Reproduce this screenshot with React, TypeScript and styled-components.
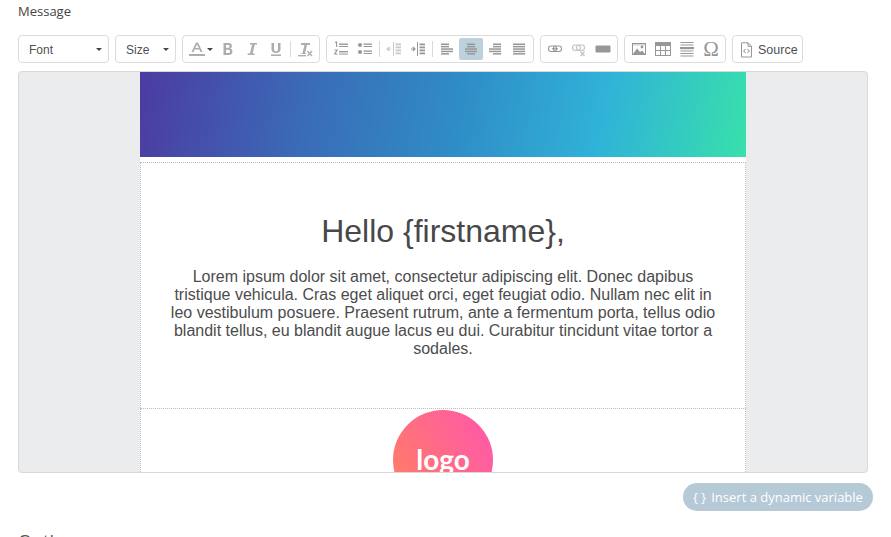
import React from "react";
import styled, { createGlobalStyle } from "styled-components";

const Global = createGlobalStyle`
  html, body { margin: 0; padding: 0; background: #fff; height: 537px; overflow: hidden; }
  body { font-family: "Open Sans", sans-serif; color: #4a4a4a; }
`;

const Page = styled.div`
  width: 855px;
  padding-left: 18px;
  display: flex;
  flex-direction: column;
`;
const Label = styled.div`
  font-size: 13px;
  line-height: 17px;
  margin-top: 3px;
  color: #444;
`;
const Toolbar = styled.div`
  display: flex;
  gap: 6px;
  margin-top: 15px;
  height: 28px;
`;
const Group = styled.div`
  display: flex;
  align-items: center;
  padding: 0 2px;
  border: 1px solid #dcdcdc;
  border-radius: 4px;
  background: #fff;
`;
const Combo = styled.div<{ $w: number; $pad: number }>`
  width: ${(p) => p.$w}px;
  box-sizing: border-box;
  display: flex;
  align-items: center;
  justify-content: space-between;
  padding: 1px 6px 0 ${(p) => p.$pad}px;
  border: 1px solid #dcdcdc;
  border-radius: 4px;
  font-family: "Liberation Sans", sans-serif;
  font-size: 12px;
  color: #505050;
`;
const Caret = styled.span`
  width: 0;
  height: 0;
  border-left: 3px solid transparent;
  border-right: 3px solid transparent;
  border-top: 3px solid #444;
`;
const Btn = styled.div<{ $active?: boolean; $w?: number }>`
  width: ${(p) => p.$w ?? 24}px;
  height: 22px;
  display: flex;
  align-items: center;
  justify-content: center;
  gap: 2px;
  border-radius: 2px;
  background: ${(p) => (p.$active ? "#bdd1dc" : "transparent")};
`;
const Sep = styled.div`
  width: 1px;
  height: 16px;
  margin: 0 2px;
  background: #d9d9d9;
`;
const SourceBtn = styled(Group)`
  width: 71px;
  box-sizing: border-box;
  padding: 1px 0 0 7px;
  gap: 5px;
  font-family: "Liberation Sans", sans-serif;
  font-size: 12.5px;
  color: #505050;
`;
const Editor = styled.div`
  width: 850px;
  height: 402px;
  box-sizing: border-box;
  margin-top: 8px;
  background: #ebecee;
  border: 1px solid #d8d8d8;
  border-radius: 4px;
  overflow: hidden;
`;
const Mail = styled.div`
  width: 606px;
  margin-left: 121px;
  background: #fff;
`;
const Hero = styled.div`
  height: 85px;
  background: linear-gradient(100deg, #4c3ba2 0%, #3a6cb7 28%, #2f8cc6 52%, #30b3d8 76%, #38e0ab 100%);
`;
const Spacer = styled.div`
  height: 5px;
  background: #fff;
`;
const Section = styled.div`
  box-sizing: border-box;
  border-style: dotted;
  border-color: #bdbdbd;
  border-width: 1px 1px 0 1px;
  text-align: center;
  font-family: "Liberation Sans", sans-serif;
  color: #4c4c4c;
`;
const TextSection = styled(Section)`
  height: 246px;
  padding: 49px 29px 0;
`;
const LogoSection = styled(Section)`
  height: 70px;
  padding-top: 1px;
`;
const Title = styled.h1`
  margin: 0;
  font-weight: 400;
  font-size: 32px;
  line-height: 38px;
  color: #484848;
`;
const Body = styled.p`
  margin: 18px 0 0;
  font-size: 16px;
  line-height: 18px;
`;
const Logo = styled.div`
  width: 100px;
  height: 100px;
  margin: 0 auto;
  border-radius: 50%;
  background: linear-gradient(60deg, #ff7c68 10%, #ff5aa6 90%);
  color: #fff;
  font-family: "Lato", sans-serif;
  font-weight: 700;
  font-size: 28px;
  line-height: 30px;
  padding-top: 34px;
  box-sizing: border-box;
`;
const Actions = styled.div`
  display: flex;
  justify-content: flex-end;
  margin-top: 10px;
`;
const Pill = styled.div`
  width: 190px;
  height: 28px;
  box-sizing: border-box;
  display: flex;
  align-items: center;
  justify-content: center;
  gap: 5px;
  border-radius: 14px;
  background: #b5c9d6;
  color: #fff;
  font-size: 13px;
  white-space: nowrap;
`;
const Heading = styled.h2`
  margin: 18px 0 0;
  font-size: 18px;
  font-weight: 400;
  line-height: 24px;
  color: #555;
`;

const G = "#979797";
const L = "#adadad";
const Svg: React.FC<{ w?: number; h?: number; o?: number; children: React.ReactNode }> = ({ w = 16, h = 16, o = 1, children }) => (
  <svg width={w} height={h} viewBox={`0 0 ${w} ${h}`} style={{ opacity: o, display: "block", overflow: "visible" }}>{children}</svg>
);
const Glyph = styled.text`
  font-family: "Liberation Serif", serif;
`;
const Lines: React.FC<{ rows: [number, number][] }> = ({ rows }) => (
  <Svg>
    {rows.map(([x, w], i) => (
      <rect key={i} x={x} y={2.5 + i * 2.4} width={w} height={1.5} fill={G} />
    ))}
  </Svg>
);

export default function App() {
  return (
    <Page>
      <Global />
      <Label>Message</Label>
      <Toolbar>
        <Combo $w={91} $pad={10}>Font<Caret /></Combo>
        <Combo $w={61} $pad={10}>Size<Caret /></Combo>
        <Group>
          <Btn $w={31}>
            <Svg>
              <path d="M2.5 11 L7 1.5 H9 L13.5 11 H11.4 L10.4 8.6 H5.6 L4.6 11Z M6.3 7 H9.7 L8 3.4Z" fill={L} fillRule="evenodd" />
              <rect x="0" y="13" width="16" height="2" fill={L} />
            </Svg>
            <Caret />
          </Btn>
          <Btn>
            <Svg><path d="M3.5 2 H9 C12.5 2 12.8 6.6 10.3 7.5 C13.5 8.2 13.2 14 9.2 14 H3.5Z M6 4 V6.8 H8.4 C10 6.8 10 4 8.4 4Z M6 8.8 V12 H8.7 C10.6 12 10.6 8.8 8.7 8.8Z" fill={L} fillRule="evenodd" /></Svg>
          </Btn>
          <Btn>
            <Svg><path d="M6 2 H13 V3.6 H10.8 L8.6 12.4 H10.6 V14 H3.6 V12.4 H5.9 L8.1 3.6 H6Z" fill={L} /></Svg>
          </Btn>
          <Btn>
            <Svg><path d="M3.5 2 H6 V8.5 C6 11 10 11 10 8.5 V2 H12.5 V8.5 C12.5 13.2 3.5 13.2 3.5 8.5Z" fill={L} /><rect x="3" y="13.4" width="10" height="1.6" fill={L} /></Svg>
          </Btn>
          <Sep />
          <Btn>
            <Svg>
              <path d="M4 2 H13 V4 H10 L8 12.4 H9.6 V13 H3 V12.4 H5.4 L7.4 4 H4Z" fill={L} />
              <rect x="1" y="14" width="8" height="1.4" fill={L} />
              <path d="M10.5 10 L15 15 M15 10 L10.5 15" stroke={L} strokeWidth="1.3" />
            </Svg>
          </Btn>
        </Group>
        <Group>
          <Btn>
            <Svg>
              <path d="M2 1.6 L3.6 1 V6 M1.5 9 H4.2 L1.6 13 H4.6" stroke={G} strokeWidth="1.1" fill="none" />
              <rect x="6" y="2.5" width="9" height="1.4" fill={G} /><rect x="6" y="5" width="9" height="1" fill={G} />
              <rect x="6" y="10" width="9" height="1.4" fill={G} /><rect x="6" y="12.6" width="9" height="1" fill={G} />
            </Svg>
          </Btn>
          <Btn>
            <Svg>
              <circle cx="3" cy="4" r="2" fill={G} /><circle cx="3" cy="11" r="2" fill={G} />
              <rect x="6.5" y="2.5" width="8.5" height="1.3" fill={G} /><rect x="6.5" y="5" width="8.5" height="1" fill={G} />
              <rect x="6.5" y="9.5" width="8.5" height="1.3" fill={G} /><rect x="6.5" y="12" width="8.5" height="1" fill={G} />
            </Svg>
          </Btn>
          <Sep />
          <Btn>
            <Svg o={0.5}>
              <path d="M1 8 H5 M3.5 6 L1 8 L3.5 10" stroke={G} strokeWidth="1.2" fill="none" />
              <rect x="7" y="1" width="1" height="14" fill={G} />
              <rect x="9.5" y="2.5" width="5.5" height="1.8" fill={G} /><rect x="9.5" y="5.5" width="5.5" height="1.8" fill={G} />
              <rect x="9.5" y="8.5" width="5.5" height="1.8" fill={G} /><rect x="9.5" y="11.5" width="5.5" height="1.8" fill={G} />
            </Svg>
          </Btn>
          <Btn>
            <Svg>
              <path d="M1 8 H5 M2.8 6 L5 8 L2.8 10" stroke={G} strokeWidth="1.2" fill="none" />
              <rect x="7" y="1" width="1" height="14" fill={G} />
              <rect x="9.5" y="2.5" width="5.5" height="1.8" fill={G} /><rect x="9.5" y="5.5" width="5.5" height="1.8" fill={G} />
              <rect x="9.5" y="8.5" width="5.5" height="1.8" fill={G} /><rect x="9.5" y="11.5" width="5.5" height="1.8" fill={G} />
            </Svg>
          </Btn>
          <Sep />
          <Btn><Lines rows={[[2, 8], [2, 8], [2, 12], [2, 12], [2, 8]]} /></Btn>
          <Btn $active><Lines rows={[[4, 8], [4, 8], [2, 12], [2, 12], [4, 8]]} /></Btn>
          <Btn><Lines rows={[[6, 8], [6, 8], [2, 12], [2, 12], [6, 8]]} /></Btn>
          <Btn><Lines rows={[[2, 12], [2, 12], [2, 12], [2, 12], [2, 12]]} /></Btn>
        </Group>
        <Group>
          <Btn>
            <Svg>
              <rect x="1.5" y="5" width="8" height="5.5" rx="2.5" fill="none" stroke={G} strokeWidth="1.1" />
              <rect x="6.5" y="5" width="8" height="5.5" rx="2.5" fill="none" stroke={G} strokeWidth="1.1" />
              <path d="M5 7.75 H11" stroke={G} strokeWidth="1.1" />
            </Svg>
          </Btn>
          <Btn>
            <Svg o={0.55}>
              <rect x="1.5" y="4" width="8" height="5.5" rx="2.7" fill="none" stroke={G} strokeWidth="1.1" />
              <rect x="5.5" y="4" width="8" height="5.5" rx="2.7" fill="none" stroke={G} strokeWidth="1.1" />
              <path d="M9.5 10.5 L13.5 15 M13.5 10.5 L9.5 15" stroke={G} strokeWidth="1.4" />
            </Svg>
          </Btn>
          <Btn>
            <Svg><rect x="0.5" y="4.5" width="15" height="7" rx="1.2" fill={G} /></Svg>
          </Btn>
        </Group>
        <Group>
          <Btn>
            <Svg>
              <rect x="1.5" y="2.5" width="13" height="11" fill="#fff" stroke={G} />
              <rect x="1.5" y="2.5" width="13" height="2" fill={G} opacity="0.4" />
              <circle cx="11" cy="6" r="1.4" fill={G} />
              <path d="M2 13 L6 7.5 L9 11 L11 9.5 L14 13Z" fill={G} />
            </Svg>
          </Btn>
          <Btn>
            <Svg>
              <rect x="0.5" y="1.5" width="15" height="13" fill="#fff" stroke={G} />
              <rect x="0.5" y="1.5" width="15" height="3.5" fill={G} />
              <path d="M5.5 5 V14.5 M10.5 5 V14.5 M0.5 9.5 H15.5" stroke={G} />
            </Svg>
          </Btn>
          <Btn>
            <Svg>
              <rect x="1.5" y="1" width="13" height="1" fill={G} /><rect x="1.5" y="3.5" width="13" height="1" fill={G} />
              <rect x="1" y="6" width="14" height="2.2" fill={G} />
              <rect x="1.5" y="9.5" width="13" height="1" fill={G} /><rect x="1.5" y="12" width="13" height="1" fill={G} /><rect x="1.5" y="14.5" width="13" height="1" fill={G} />
            </Svg>
          </Btn>
          <Btn>
            <Svg w={18} h={18}>
              <Glyph x="9" y="16" fontSize="21" textAnchor="middle" fill={G}>Ω</Glyph>
            </Svg>
          </Btn>
        </Group>
        <SourceBtn>
          <Svg w={13} h={16}>
            <path d="M1.5 0.8 H8 L11.5 4.3 V15 H1.5Z" fill="#fff" stroke={G} />
            <path d="M8 0.8 V4.3 H11.5" fill="none" stroke={G} />
            <path d="M5.5 7 L3.6 9 L5.5 11 M7.5 7 L9.4 9 L7.5 11" fill="none" stroke="#777" strokeWidth="0.9" />
          </Svg>
          Source
        </SourceBtn>
      </Toolbar>
      <Editor>
        <Mail>
          <Hero />
          <Spacer />
          <TextSection>
            <Title>Hello {"{firstname}"},</Title>
            <Body>
              Lorem ipsum dolor sit amet, consectetur adipiscing elit. Donec dapibus tristique vehicula. Cras eget aliquet orci, eget feugiat odio. Nullam nec elit in leo vestibulum posuere. Praesent rutrum, ante a fermentum porta, tellus odio blandit tellus, eu blandit augue lacus eu dui. Curabitur tincidunt vitae tortor a sodales.
            </Body>
          </TextSection>
          <LogoSection>
            <Logo>logo</Logo>
          </LogoSection>
        </Mail>
      </Editor>
      <Actions>
        <Pill><span>{"{ }"}</span><span>Insert a dynamic variable</span></Pill>
      </Actions>
      <Heading>Options</Heading>
    </Page>
  );
}
